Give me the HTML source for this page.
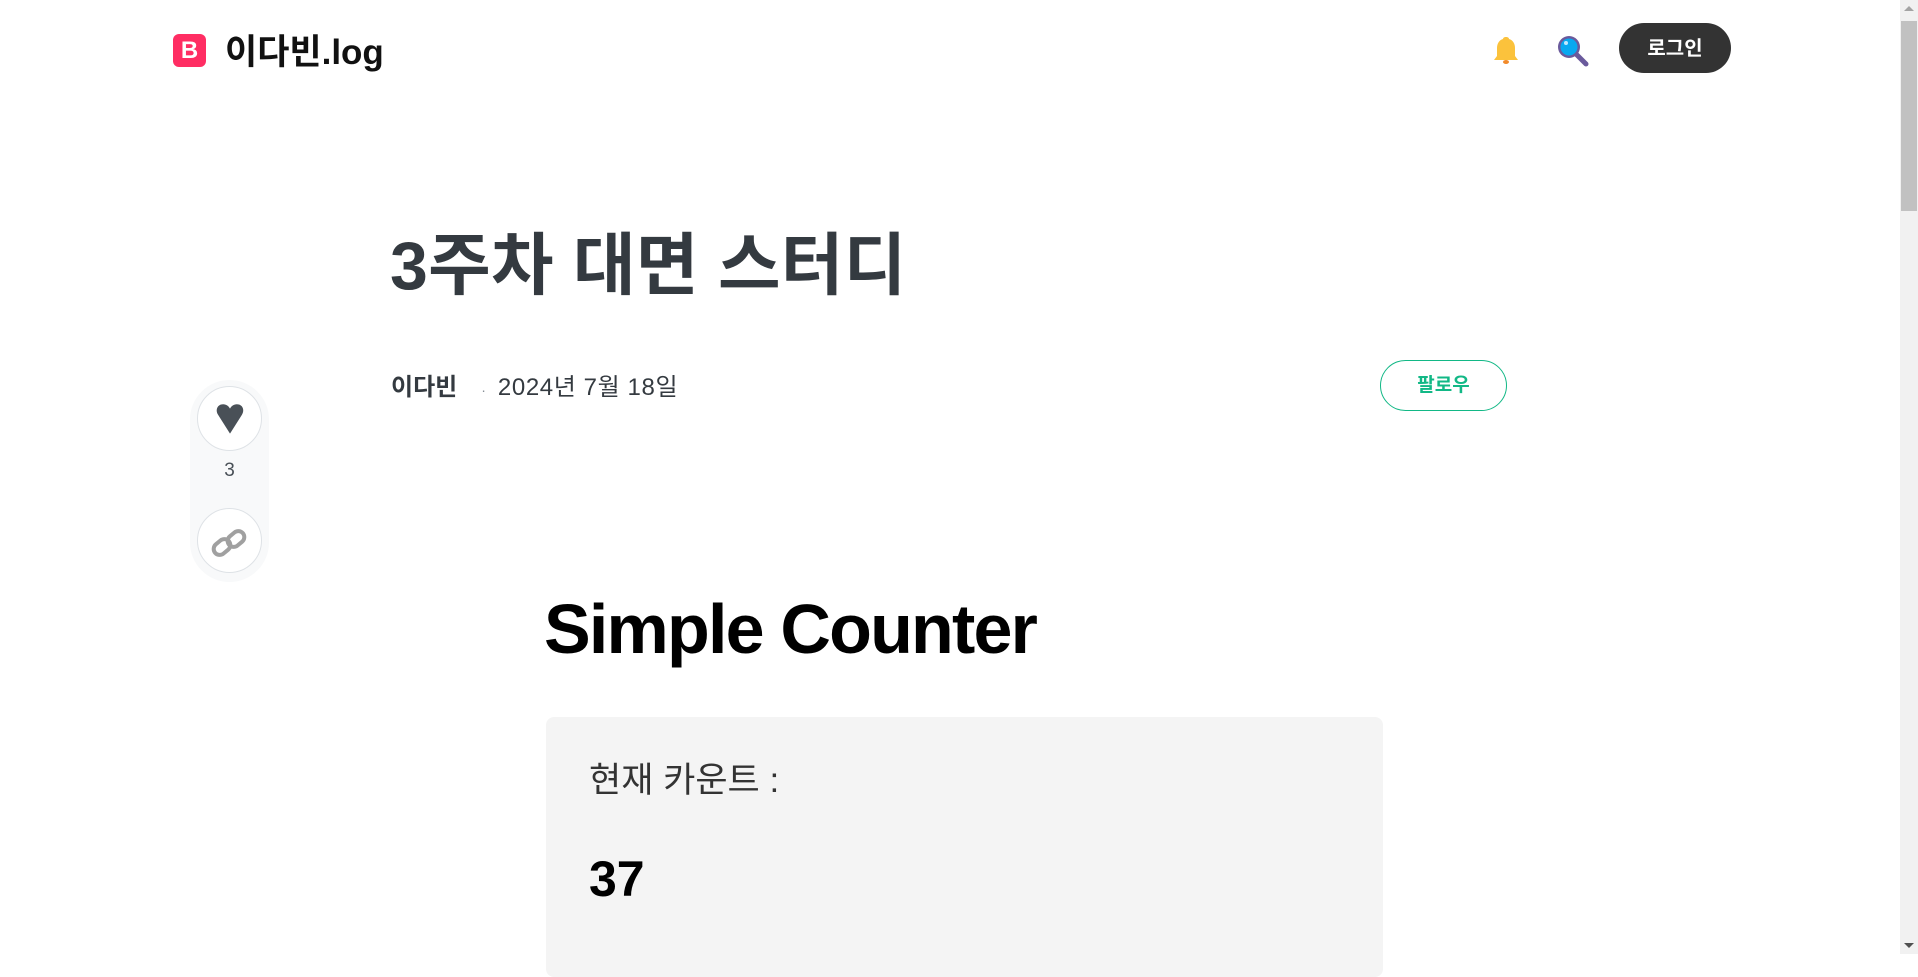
<!DOCTYPE html>
<html><head><meta charset="utf-8"><style>
*{margin:0;padding:0;box-sizing:border-box}
html,body{width:1918px;height:954px;overflow:hidden;background:#fff;font-family:"Liberation Sans","Noto Sans CJK KR",sans-serif;color:#212529}
.abs{position:absolute}
</style></head><body>
<div class="abs" style="left:173px;top:34px;width:33px;height:33px;background:#ff2d63;border-radius:6px;color:#fff;font-weight:bold;font-size:24px;line-height:33px;text-align:center">B</div>
<div class="abs" style="left:225px;top:30px;font-size:35px;font-weight:bold;color:#111;line-height:46px">이다빈.log</div>
<svg class="abs" style="left:1490px;top:34px" width="32" height="32" viewBox="0 0 32 32"><path d="M16 3c-2 0-3 1-3 2c-4 1-6 5-6 9v8l-3 4h24l-3-4v-8c0-4-2-8-6-9c0-1-1-2-3-2z" fill="#fbc23c"/><ellipse cx="16" cy="28" rx="3" ry="2" fill="#f28a2a"/></svg>
<svg class="abs" style="left:1556px;top:34px" width="34" height="34" viewBox="0 0 34 34"><line x1="20" y1="20" x2="30" y2="30" stroke="#6a5a9c" stroke-width="5" stroke-linecap="round"/><circle cx="13" cy="13" r="11" fill="#6a5a9c"/><circle cx="13" cy="13" r="8.5" fill="#08a8f0"/><circle cx="10" cy="9" r="2" fill="#bfe8ff"/></svg>
<div class="abs" style="left:1619px;top:23px;width:112px;height:50px;border-radius:25px;background:#333;color:#fff;font-weight:bold;font-size:20px;line-height:52px;text-align:center">로그인</div>
<div class="abs" style="left:1900px;top:0;width:18px;height:954px;background:#f1f1f1"></div>
<div class="abs" style="left:1901px;top:21px;width:16px;height:190px;background:#c1c1c1"></div>
<div class="abs" style="left:1904px;top:6px;width:0;height:0;border-left:5px solid transparent;border-right:5px solid transparent;border-bottom:5px solid #a3a3a3"></div>
<div class="abs" style="left:1904px;top:943px;width:0;height:0;border-left:5px solid transparent;border-right:5px solid transparent;border-top:5px solid #505050"></div>

<div class="abs" style="left:390px;top:224px;font-size:68px;font-weight:bold;color:#343a40;line-height:84px;letter-spacing:0.3px">3주차 대면 스터디</div>
<div class="abs" style="left:391px;top:372px;font-size:24px;line-height:32px;color:#343a40"><b>이다빈</b><span style="margin:0 12px 0 24px;color:#868e96;font-size:14px">·</span><span style="letter-spacing:0.6px">2024년 7월 18일</span></div>
<div class="abs" style="left:1380px;top:360px;width:127px;height:51px;border:1px solid #12b886;border-radius:26px;color:#12b886;font-weight:bold;font-size:19px;line-height:49px;text-align:center">팔로우</div>

<div class="abs" style="left:190px;top:380px;width:79px;height:202px;background:#f8f9fa;border-radius:40px"></div>
<div class="abs" style="left:197px;top:386px;width:65px;height:65px;border:1px solid #dee2e6;border-radius:50%;background:#fff"></div>
<svg class="abs" style="left:215px;top:401px" width="30" height="34" viewBox="0 0 24 27"><path d="M12 26L2.5 11C0 7 2 2.5 6.5 2.5c2.5 0 4.5 1.5 5.5 3.5c1-2 3-3.5 5.5-3.5C22 2.5 24 7 21.5 11z" fill="#495057"/></svg>
<div class="abs" style="left:190px;top:460px;width:79px;text-align:center;font-size:19px;color:#495057">3</div>
<div class="abs" style="left:197px;top:508px;width:65px;height:65px;border:1px solid #dee2e6;border-radius:50%;background:#fff"></div>
<svg class="abs" style="left:210px;top:524px" width="40" height="40" viewBox="0 0 40 40"><g fill="none" stroke="#a0a0a0" stroke-width="4"><rect x="3" y="17" width="18" height="12" rx="6" transform="rotate(-40 12 23)"/><rect x="17" y="9" width="18" height="12" rx="6" transform="rotate(-40 26 15)"/></g></svg>

<div class="abs" style="left:544px;top:587px;font-size:70px;font-weight:bold;color:#000;line-height:84px;letter-spacing:-1.8px">Simple Counter</div>
<div class="abs" style="left:546px;top:717px;width:837px;height:260px;background:#f4f4f4;border-radius:8px"></div>
<div class="abs" style="left:589px;top:758px;font-size:35px;color:#333;line-height:46px">현재 카운트 :</div>
<div class="abs" style="left:589px;top:851px;font-size:50px;font-weight:bold;color:#000;line-height:56px">37</div>
</body></html>
